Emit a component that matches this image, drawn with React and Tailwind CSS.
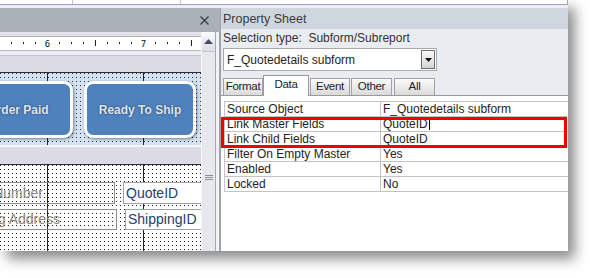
const ticks = [11, 23, 35, 59, 71, 83, 107, 119, 131, 155, 167, 179];

export default function App() {
  return (
    <div className="w-[595px] h-[278px] bg-white overflow-hidden font-['Liberation_Sans',Arial,sans-serif]">
      <div className="w-[568px] h-[251px] flex flex-col bg-white shadow-[7px_8px_12px_rgba(0,0,0,0.45)]">
        <TopStrip />
        <div className="flex flex-1 min-h-0">
          <DesignPane />
          <PropertySheet />
        </div>
      </div>
    </div>
  );
}

function TopStrip() {
  return (
    <div className="h-[8px] shrink-0 flex flex-col">
      <div className="h-[5px] bg-white border-b border-[#a99cca] flex">
        <div className="w-[72px]" />
        <div className="w-px bg-[#c9bfe0]" />
        <div className="w-[107px]" />
        <div className="w-px bg-[#c9bfe0]" />
        <div className="flex-1" />
        <div className="w-px bg-[#a99cca]" />
      </div>
      <div className="flex-1 bg-[#eeedf4]" />
    </div>
  );
}

function DesignPane() {
  return (
    <div className="w-[220px] shrink-0 flex flex-col">
      <div className="h-[24px] shrink-0 bg-[#aab1b9] flex items-center justify-end pr-[11px]">
        <svg width="9" height="9" viewBox="0 0 9 9">
          <path d="M0.5 0.5L8.5 8.5M8.5 0.5L0.5 8.5" stroke="#3a3d42" strokeWidth="1.4" />
        </svg>
      </div>
      <div className="flex flex-1 min-h-0">
        <Canvas />
        <div className="w-[15px] flex flex-col bg-[#e7e8ed] border-l border-[#f7f7f9] border-r border-r-[#a3a7ae]">
          <div className="h-[20px] flex items-center justify-center bg-gradient-to-b from-[#fbfbfc] to-[#dcdee4] border-b border-[#c3c6cd]">
            <svg width="9" height="5" viewBox="0 0 9 5">
              <polygon points="0,5 4.5,0 9,5" fill="#3f4d66" />
            </svg>
          </div>
          <div className="flex-1 flex flex-col items-center pt-[123px] gap-[1px]">
            <div className="w-[8px] h-px bg-[#8b8f96]" />
            <div className="w-[8px] h-px bg-[#8b8f96]" />
            <div className="w-[8px] h-px bg-[#8b8f96]" />
          </div>
        </div>
        <div className="w-[4px] bg-[#f3f3f7] border-r border-[#9ea3ab]" />
      </div>
    </div>
  );
}

function Canvas() {
  return (
    <div className="w-[186px] flex-1 flex flex-col min-w-0 overflow-hidden">
      <div className="h-[4px] shrink-0 bg-[#e3e3ea]" />
      <div className="h-[15px] shrink-0 bg-white border-y border-[#b4b4bc]">
        <svg width="201" height="13" viewBox="0 0 201 13">
          {ticks.map((x) => (
            <rect key={x} x={x} y="5" width="1" height="2" fill="#222" />
          ))}
          <rect x="95" y="3" width="1" height="6" fill="#222" />
          <rect x="191" y="3" width="1" height="6" fill="#222" />
          <text x="47.5" y="9.5" textAnchor="middle" fontSize="9" fontFamily="DejaVu Sans Mono, monospace" fill="#111">6</text>
          <text x="143.5" y="9.5" textAnchor="middle" fontSize="9" fontFamily="DejaVu Sans Mono, monospace" fill="#111">7</text>
        </svg>
      </div>
      <div className="h-[5px] shrink-0 bg-[#ececf2] border-b border-[#c4c4cc]" />
      <div className="h-[17px] shrink-0 bg-[#dcdbe5] border-b border-[#2e2e2e]" />
      <div className="h-[72px] shrink-0 relative bg-[#d3e1f1] bg-[image:conic-gradient(at_1px_1px,transparent_75%,#2a3240_0)] bg-[length:4px_4px]">
        <div className="absolute top-0 bottom-0 left-[47px] w-px bg-[#222]" />
        <div className="absolute top-0 bottom-0 left-[143px] w-px bg-[#222]" />
        <FormButton className="left-[-37px] w-[110px]">Order Paid</FormButton>
        <FormButton className="left-[84px] w-[112px]">Ready To Ship</FormButton>
      </div>
      <div className="h-[20px] shrink-0 bg-[#dcdbe5] border-t-2 border-t-[#f5f5f8] border-b border-b-[#2e2e2e]" />
      <div className="flex-1 relative bg-white bg-[image:conic-gradient(at_1px_1px,transparent_75%,#222_0)] bg-[length:4px_4px]">
        <div className="absolute top-0 bottom-0 left-[47px] w-px bg-[#222]" />
        <div className="absolute top-0 bottom-0 left-[143px] w-px bg-[#222]" />
        <div className="absolute left-[-100px] w-[215px] top-[17px] h-[22px] border border-[#8c8c8c] flex items-center justify-end pr-[71px] text-[14px] text-[#8b8680] whitespace-nowrap">
          Quote Number
        </div>
        <div className="absolute left-[-100px] w-[217px] top-[44px] h-[21px] border border-[#8c8c8c] flex items-center justify-end pr-[56px] text-[14px] text-[#8b8680] whitespace-nowrap">
          Shipping Address
        </div>
        <div className="absolute left-[123px] w-[90px] top-[17px] h-[22px] bg-white border border-[#a2a2a2] flex items-center pl-[2px] text-[14px] text-[#23406f]">
          QuoteID
        </div>
        <div className="absolute left-[125px] w-[90px] top-[44px] h-[21px] bg-white border border-[#a2a2a2] flex items-center pl-[2px] text-[14px] text-[#23406f]">
          ShippingID
        </div>
      </div>
    </div>
  );
}

function FormButton({ className, children }) {
  return (
    <div
      className={
        'absolute top-[8px] h-[57px] rounded-[9px] border-[3px] border-white bg-[#4f81bd] shadow-[1px_1px_3px_rgba(0,0,0,0.45)] flex items-center justify-center text-[12px] font-bold text-[#dfe4ec] whitespace-nowrap [text-shadow:0_0_2px_rgba(20,30,50,0.7)] ' +
        className
      }
    >
      {children}
    </div>
  );
}

function PropertySheet() {
  const rows = [
    ['Source Object', 'F_Quotedetails subform'],
    ['Link Master Fields', 'QuoteID'],
    ['Link Child Fields', 'QuoteID'],
    ['Filter On Empty Master', 'Yes'],
    ['Enabled', 'Yes'],
    ['Locked', 'No'],
  ];
  const tabs = [
    ['Format', 'w-[40px]'],
    ['Data', 'w-[46px]'],
    ['Event', 'w-[40px] ml-px'],
    ['Other', 'w-[41px] ml-px'],
    ['All', 'w-[41px] ml-[2px]'],
  ];
  return (
    <div className="flex-1 min-w-0 flex flex-col relative bg-[#e9ecf0] border-l border-[#9da2aa] text-[12px] text-[#1e1e1e]">
      <div className="h-[21px] shrink-0 bg-[#cfd6de] pl-[2px] pt-[2px] flex items-center text-[12.5px] text-[#3b3b3b]">
        Property Sheet
      </div>
      <div className="h-[15px] shrink-0 pl-[2px] pt-[2px] flex items-center text-[#333] whitespace-pre">
        Selection type:  Subform/Subreport
      </div>
      <div className="mt-[4px] ml-[2px] w-[214px] h-[23px] shrink-0 bg-white border border-[#a8a8a8] flex items-center pl-[3px] pr-px">
        <span className="flex-1">F_Quotedetails subform</span>
        <div className="w-[14px] h-[19px] border border-[#6e6e6e] bg-gradient-to-b from-[#fafafa] to-[#d6d6d6] flex items-center justify-center">
          <svg width="7" height="4" viewBox="0 0 7 4">
            <polygon points="0,0 7,0 3.5,4" fill="#111" />
          </svg>
        </div>
      </div>
      <div className="mt-[4px] h-[20px] shrink-0 flex items-end pl-[2px] text-[11.5px] tracking-[-0.3px]">
        {tabs.map(([t, w]) =>
          t === 'Data' ? (
            <div key={t} className={w + ' h-[21px] -mb-px relative z-10 bg-white border border-b-0 border-[#9a9a9a] flex items-center justify-center pb-[3px]'}>
              {t}
            </div>
          ) : (
            <div key={t} className={w + ' h-[17px] bg-gradient-to-b from-[#fbfbfb] to-[#dadada] border border-b-0 border-[#a3a3a3] flex items-center justify-center whitespace-nowrap'}>
              {t}
            </div>
          )
        )}
      </div>
      <div className="flex-1 bg-white border-t border-[#9a9a9a] pt-[5px] pl-[3px]">
        <div className="border-t border-l border-[#c4c4c4]">
          {rows.map(([k, v], i) => (
            <div key={k} className="h-[15px] flex border-b border-[#c4c4c4]">
              <div className="w-[156px] border-r border-[#c4c4c4] pl-[2px] flex items-center whitespace-nowrap">{k}</div>
              <div className="flex-1 pl-[2px] flex items-center whitespace-nowrap">
                {v}
                {i === 1 && <span className="ml-px w-px h-[12px] bg-black" />}
              </div>
            </div>
          ))}
        </div>
      </div>
      <div className="absolute left-0 top-[109px] w-[346px] h-[31px] border-[3px] border-[#f00000]" />
    </div>
  );
}
